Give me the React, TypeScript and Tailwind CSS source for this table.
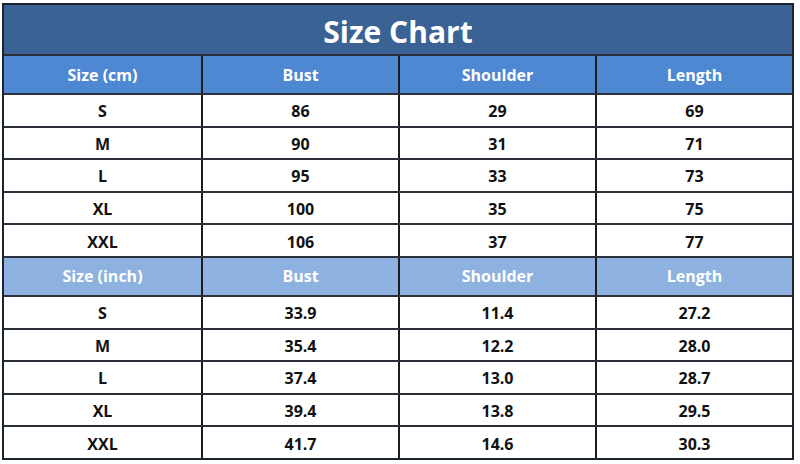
const cmRows = [
  ["S", "86", "29", "69"],
  ["M", "90", "31", "71"],
  ["L", "95", "33", "73"],
  ["XL", "100", "35", "75"],
  ["XXL", "106", "37", "77"],
];

const inchRows = [
  ["S", "33.9", "11.4", "27.2"],
  ["M", "35.4", "12.2", "28.0"],
  ["L", "37.4", "13.0", "28.7"],
  ["XL", "39.4", "13.8", "29.5"],
  ["XXL", "41.7", "14.6", "30.3"],
];

type RowProps = {
  cells: string[];
  header?: boolean;
  bg?: string;
};

const Row = ({ cells, header, bg }: RowProps) => {
  return (
    <div
      className={`grid grid-cols-4 border-t-2 border-[#2a2f38] ${
        header ? "h-[39px] text-white" : "h-[32.6px] text-[#111]"
      } ${bg ?? "bg-white"}`}
    >
      {cells.map((c, i) => (
        <div
          key={i}
          className={`flex items-center justify-center text-[16px] font-bold ${
            header ? "" : "pt-[2px]"
          } ${i > 0 ? "border-l-2 border-[#1c1c1c]" : ""}`}
        >
          {c}
        </div>
      ))}
    </div>
  );
};

export default function App() {
  return (
    <div
      className="w-[800px] h-[464px] bg-white pt-[3px] pl-[2px]"
      style={{ fontFamily: "'Open Sans', Lato, sans-serif" }}
    >
      <div className="w-[792px] border-2 border-[#1c2430]">
        <div className="h-[49px] pt-[3px] bg-[#3a6295] flex items-center justify-center text-white text-[30px] font-bold">
          Size Chart
        </div>
        <Row
          cells={["Size (cm)", "Bust", "Shoulder", "Length"]}
          header
          bg="bg-[#4f88d2]"
        />
        {cmRows.map((r) => (
          <Row key={r[0]} cells={r} />
        ))}
        <Row
          cells={["Size (inch)", "Bust", "Shoulder", "Length"]}
          header
          bg="bg-[#8db2df]"
        />
        {inchRows.map((r) => (
          <Row key={r[0]} cells={r} />
        ))}
      </div>
    </div>
  );
}
